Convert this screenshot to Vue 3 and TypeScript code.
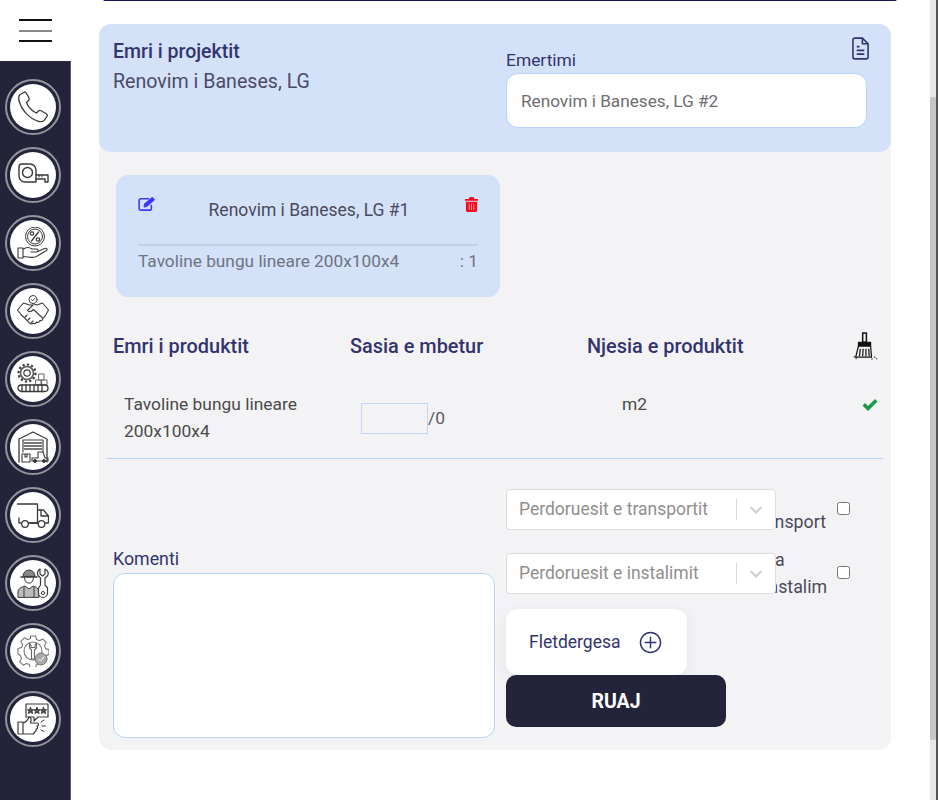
<script setup lang="ts">
const icons = ['phone', 'tape', 'percent', 'shake', 'gear', 'store', 'truck', 'worker', 'cog', 'rate']
</script>

<template>
  <div class="page">
    <aside class="side">
      <div class="burger"><i></i><i class="mid"></i><i></i></div>
      <nav class="rail">
        <div v-for="n in icons" :key="n" class="ring">
          <div class="disc">
            <svg class="glyph" viewBox="0 0 32 32" width="32" height="32" fill="none" stroke="#3a3a3a" stroke-width="1" stroke-linejoin="round" stroke-linecap="round">
              <template v-if="n === 'phone'">
                <path d="M3 3.500 7.500 1c1 0 1.500.5 2 1.500l2.500 4.500c.5 1 .2 1.800-.5 2.500L9.500 11.500c1.500 4 5.500 8.500 10 10.500l2-2c.8-.7 1.800-.8 2.700-.2l5 3c1 .6 1.300 1.600.8 2.500L27.500 29c-1 1.500-3.500 2-6 1.300C12 27.500 4.500 19 2 9.500 1.400 7 1.800 4.800 3 3.500Z" stroke-width="1.300"/>
              </template>
              <template v-else-if="n === 'tape'">
                <path d="M5 5h8a6 6 0 0 1 6 6v12H8a6 6 0 0 1-6-6V8a3 3 0 0 1 3-3Z" stroke-width="1.400"/>
                <circle cx="10.500" cy="13.500" r="5" stroke-width="1.400"/>
                <path d="M19 16h12v7h-3v-3h-9" stroke-width="1.400"/>
                <path d="M22 16v2M25 16v2" />
              </template>
              <template v-else-if="n === 'percent'">
                <circle cx="18" cy="9.500" r="9.500"/>
                <circle cx="18" cy="9.500" r="7.500"/>
                <path d="M21.500 5l-7 9" stroke-width="1.300"/>
                <circle cx="15" cy="6.500" r="1.700" stroke-width="1.200"/>
                <circle cx="21" cy="12.500" r="1.700" stroke-width="1.200"/>
                <path d="M1 21h5v10H1zM6 22.500c3-2.500 6-2.500 9-.5h4.500c2 0 2 3 0 3H14M19.500 25l8-3.500c2.500-.8 3.500 1 1.500 2.300l-10 6c-4 1.200-8 .5-13-.3" stroke-width="1.100"/>
              </template>
              <template v-else-if="n === 'shake'">
                <circle cx="16" cy="4.500" r="4"/>
                <path d="M14.500 4.500l1.200 1.200 2-2.200"/>
                <path d="M0.500 15l6-7 6 2h3.500l-5.500 5.500c1.500 2 4 1 6-1l9 8.500c1 1.500-1 3.500-2.500 2.300-.3 2.200-2.500 2.700-3.500 1.700-.5 1.800-2.500 2.300-3.500 1.200-1 1.300-2.800 1-3.800-.5L4 19.500Z" stroke-width="1.100"/>
                <path d="M31.500 15l-6-7-5.500 2-4-1.200M26.500 23l2.500-3.500 2.500-4.500" stroke-width="1.100"/>
                <path d="M8 22l2-2M11 25l2-2M14 28l2-2" stroke-width="1.100"/>
              </template>
              <template v-else-if="n === 'gear'">
                <circle cx="10" cy="10" r="3.200" stroke-width="1.200"/>
                <circle cx="10" cy="10" r="6.500" stroke-width="1.600" stroke="#555"/>
                <circle cx="10" cy="10" r="8.500" stroke-width="2.200" stroke-dasharray="2.200 2.200" stroke-linecap="butt"/>
                <path d="M19 17h5v5h-5zM25 17h5v5h-5zM22 11h5v6h-5z" stroke="#666"/>
                <rect x="1" y="22" width="30" height="6.500" rx="3.200" stroke-width="1.300"/>
                <path d="M5 22v6.500M9 22v6.500M13 22v6.500M17 22v6.500M21 22v6.500M25 22v6.500" stroke-width="1.300"/>
              </template>
              <template v-else-if="n === 'store'">
                <path d="M2 31V8L16 1l14 7v23" stroke-width="1.300"/>
                <path d="M6 21V9h20v12" stroke-width="1.100"/>
                <path d="M7 12h18M7 15h18M7 18h18" stroke-width="1.800" stroke="#777" stroke-linecap="butt"/>
                <path d="M5 23h8v8H5zM8 23v3h2v-3" stroke-width="1.100"/>
                <path d="M15 27h6v-6h5l2 6h3v3H15z" stroke-width="1.100"/>
                <circle cx="18" cy="30" r="1.500" fill="#333"/>
                <circle cx="27" cy="30" r="1.500" fill="#333"/>
              </template>
              <template v-else-if="n === 'truck'">
                <path d="M0.500 5h20v19H12M20.500 11h6l5 6v7h-3" stroke-width="1.300"/>
                <path d="M24 11v6h7M4 24H2v-5" stroke-width="1.300"/>
                <circle cx="8" cy="25" r="3.300" stroke-width="1.300"/>
                <circle cx="24.500" cy="25" r="3.300" stroke-width="1.300"/>
                <path d="M12 24h9" stroke-width="1.300"/>
              </template>
              <template v-else-if="n === 'worker'">
                <path d="M6 9a6 6 0 0 1 12 0z" fill="#888"/>
                <path d="M4 10h16" stroke-width="1.600"/>
                <path d="M7.500 11c0 7 9 7 9 0"/>
                <path d="M1 30v-5c0-3 3-5 7-6l4 3 4-3c4 1 6 3 6 6v5z" fill="#bbb"/>
                <path d="M7 20v10M17 20v10" />
                <path d="M23 2v5l2.500 2 2.500-2V2c2.800 1.500 3.800 4 2.700 6.500L28 11v7l2.500 3v5a4.500 4.500 0 0 1-9 0v-5l2-3v-7l-2.500-2.500C20 6 20.500 3.500 23 2Z" fill="#fff" stroke-width="1.200"/>
                <circle cx="26" cy="26" r="1.600"/>
              </template>
              <template v-else-if="n === 'cog'">
                <path d="M13.500 1h5l1 3.500 3 1.200 3.200-1.800 3.500 3.500-1.800 3.200 1.200 3 3.400 1v5l-3.400 1-1.200 3 1 1.800-4 4-2-1-3 1.200-1 3.400h-5l-1-3.400-3-1.200-3.200 1.800-3.500-3.500 1.800-3.200-1.200-3L1 18.500v-5l3.500-1 1.200-3-1.800-3.200 3.500-3.500 3.200 1.800 3-1.200Z" stroke="#777" stroke-width="1.100"/>
                <circle cx="16" cy="16" r="9" stroke="#777" stroke-width="1.100"/>
                <path d="M12.500 8v5l2 2v9h3v-9l2-2V8l-1.500 2.500v2h-4v-2Z" stroke="#666" stroke-width="1.100"/>
                <circle cx="24" cy="24" r="6" fill="#aaa" stroke="#777"/>
                <path d="M21.500 24l2 2 3.500-4" stroke="#fff"/>
              </template>
              <template v-else>
                <path d="M9 1h22v13H21l-4 4v-4H9z" stroke-width="1.200"/>
                <path d="M13.500 4.500l1.100 2.200h2l-1.500 1.500.5 2.300-2.100-1.200-2.100 1.200.5-2.300-1.500-1.500h2Z" fill="#555"/>
                <path d="M20 4.500l1.100 2.200h2l-1.500 1.500.5 2.300-2.100-1.200-2.100 1.200.5-2.300-1.500-1.500h2Z" fill="#555"/>
                <path d="M26.500 4.500l1.100 2.200h2l-1.500 1.500.5 2.300-2.100-1.200-2.100 1.200.5-2.300-1.500-1.500h2Z" fill="#555"/>
                <path d="M1 19h5v12H1zM6 20c3-1 5-3 6-6 2.500 0 2.500 3 1.500 6H20c2 0 2 3 0 3 1 1 1 3-1 3 .5 1.500 0 3-1.500 3 0 1.500-1 2-2 2H6" stroke-width="1.200"/>
                <path d="M24 19l3-2M25 23h3.500M24 27l3 1.500"/>
              </template>
            </svg>
          </div>
        </div>
      </nav>
    </aside>

    <main class="main">
      <div class="topline"></div>
      <section class="panel">
        <header class="head">
          <div class="head-left">
            <h3>Emri i projektit</h3>
            <p>Renovim i Baneses, LG</p>
          </div>
          <div class="head-right">
            <label class="name-label">Emertimi</label>
            <input class="name-input" value="Renovim i Baneses, LG #2" />
          </div>
          <svg class="doc" viewBox="0 0 18 24" width="17" height="23" fill="none" stroke="#33346e" stroke-width="1.700" stroke-linejoin="round">
            <path d="M3 1h8l6 6v14a2 2 0 0 1-2 2H3a2 2 0 0 1-2-2V3a2 2 0 0 1 2-2Z"/>
            <path d="M11 1v6h6M5 10h3M5 14h8M5 18h8"/>
          </svg>
        </header>

        <div class="version">
          <div class="version-top">
            <svg class="edit" viewBox="0 0 20 16" width="18" height="14" fill="none" stroke="#3b3bff" stroke-width="1.800" stroke-linejoin="round" stroke-linecap="round">
              <path d="M15 9.500V13a2 2 0 0 1-2 2H3a2 2 0 0 1-2-2V4a2 2 0 0 1 2-2h9"/>
              <path d="M7.500 8 16 1l2 2-8.500 7.500-2.500.5Z" fill="#3b3bff"/>
            </svg>
            <span class="version-title">Renovim i Baneses, LG #1</span>
            <svg class="trash" viewBox="0 0 14 16" width="13" height="15" fill="#f50a1e">
              <path d="M5 0h4l1 2h4v2H0V2h4ZM1 5h12v9.500a1.500 1.500 0 0 1-1.500 1.500h-9A1.500 1.500 0 0 1 1 14.500Z"/>
              <path d="M4 7h1v7H4zM6.500 7h1v7h-1zM9 7h1v7H9z" fill="#f7a0a8"/>
            </svg>
          </div>
          <div class="version-row">
            <span>Tavoline bungu lineare 200x100x4</span>
            <span>: 1</span>
          </div>
        </div>

        <div class="table table-head">
          <span>Emri i produktit</span>
          <span>Sasia e mbetur</span>
          <span>Njesia e produktit</span>
          <svg class="brush" viewBox="0 0 26 30" width="26" height="28" fill="none" stroke="#111" stroke-width="1.300" stroke-linejoin="round">
            <path d="M10.500 1h4v10h-4z" stroke-width="1.600"/>
            <path d="M6 11h13v4H6z" fill="#111"/>
            <path d="M6 15h13l1 12H3Z"/>
            <path d="M8 18l-1 8M11 18l-.5 8M14 18v8M17 18l.5 8" />
            <path d="M1 26.500h1M3 28.500h1M20 29h1M23 27h1M25 28.500h1" stroke-width="1.500"/>
          </svg>
        </div>

        <div class="table table-row">
          <span class="prod">Tavoline bungu lineare<br />200x100x4</span>
          <span class="qty"><input class="qty-input" /><span>/0</span></span>
          <span class="unit">m2</span>
          <svg class="check" viewBox="0 0 16 12" width="16" height="12" fill="#1a9b45">
            <path d="M0.500 6.500 3 4l3 3 7-7 2.500 2.500L6 12Z"/>
          </svg>
        </div>

        <div class="bottom">
          <div class="comment">
            <label>Komenti</label>
            <textarea></textarea>
          </div>
          <div class="opts">
            <div class="opt">
              <div class="select">
                <span class="ph">Perdoruesit e transportit</span>
                <span class="sep"></span>
                <svg viewBox="0 0 20 20" width="20" height="20" fill="#ccc"><path d="M4.500 7.100c.4-.4 1-.4 1.400 0L10 11.100l4.100-4c.4-.4 1-.4 1.400 0s.4 1 0 1.400l-4.800 4.700c-.4.400-1 .4-1.400 0L4.500 8.500c-.4-.4-.4-1 0-1.400Z"/></svg>
              </div>
              <span class="opt-label one">Transport</span>
              <input type="checkbox" class="cb" />
            </div>
            <div class="opt second">
              <div class="select">
                <span class="ph">Perdoruesit e instalimit</span>
                <span class="sep"></span>
                <svg viewBox="0 0 20 20" width="20" height="20" fill="#ccc"><path d="M4.500 7.100c.4-.4 1-.4 1.400 0L10 11.100l4.100-4c.4-.4 1-.4 1.400 0s.4 1 0 1.400l-4.800 4.700c-.4.400-1 .4-1.400 0L4.500 8.500c-.4-.4-.4-1 0-1.400Z"/></svg>
              </div>
              <span class="opt-label two">Pa<br />instalim</span>
              <input type="checkbox" class="cb" />
            </div>
            <div class="upload">
              <span>Fletdergesa</span>
              <svg viewBox="0 0 24 24" width="23" height="23" fill="none" stroke="#33346e" stroke-width="1.500" stroke-linecap="round">
                <circle cx="12" cy="12" r="10.500"/><path d="M12 6.500v11M6.500 12h11"/>
              </svg>
            </div>
            <button class="save">RUAJ</button>
          </div>
        </div>
      </section>
    </main>

    <div class="scrollbar"><div class="thumb"></div></div>
  </div>
</template>

<style>
html, body { margin: 0; background: #fff; overflow: hidden; }
</style>

<style scoped>
.page {
  display: flex;
  height: 800px;
  width: 938px;
  font-family: Roboto, "Liberation Sans", sans-serif;
  overflow: hidden;
  background: #fff;
}
.side { width: 71px; flex: none; display: flex; flex-direction: column; }
.burger {
  height: 61px;
  box-sizing: border-box;
  padding-top: 19px;
  display: flex;
  flex-direction: column;
  align-items: center;
  gap: 8.500px;
}
.burger i { display: block; width: 33px; height: 2px; background: #111; }
.burger i.mid { background: #888; }
.rail {
  flex: 1;
  background: #23233a;
  border-right: 1px solid #5a5a6e;
  box-sizing: border-box;
  padding-top: 18px;
  display: flex;
  flex-direction: column;
  gap: 12px;
}
.ring {
  width: 56px;
  height: 56px;
  margin-left: 4.500px;
  box-sizing: border-box;
  border-radius: 50%;
  border: 2px solid #94949e;
  display: flex;
  align-items: center;
  justify-content: center;
}
.disc {
  width: 46px;
  height: 46px;
  border-radius: 50%;
  background: #fff;
  display: flex;
  align-items: center;
  justify-content: center;
}
.glyph { filter: blur(0.3px); }
.main { flex: 1; min-width: 0; position: relative; padding: 24px 47px 0 28px; }
.topline {
  position: absolute;
  left: 32px;
  right: 41px;
  top: -1px;
  height: 2px;
  background: #14145e;
  border-radius: 0 0 3px 3px;
}
.panel {
  height: 726px;
  background: #f3f3f6;
  border-radius: 12px;
  display: flex;
  flex-direction: column;
}
.head {
  height: 128px;
  background: #d3e1f9;
  border-radius: 12px;
  display: grid;
  grid-template-columns: 393px 361px;
  position: relative;
  box-sizing: border-box;
  padding: 16px 0 0 14px;
}
.head-left h3 { margin: 0; font-size: 19.500px; line-height: 24px; font-weight: 500; color: #33346e; }
.head-left p { margin: 6px 0 0; font-size: 19.600px; line-height: 24px; color: #4b4b68; }
.head-right { display: flex; flex-direction: column; padding-top: 9px; min-width: 0; }
.name-label { font-size: 17.400px; line-height: 22px; color: #33346e; margin-bottom: 2px; }
.name-input {
  box-sizing: border-box;
  width: 361px;
  height: 55px;
  border: 1px solid #b9d2fb;
  border-radius: 12px;
  background: #fff;
  padding: 0 14px;
  font: 17.200px Roboto, sans-serif;
  color: #6e6e70;
  outline: none;
}
.doc { position: absolute; right: 22px; top: 13px; }
.version {
  width: 384px;
  height: 122px;
  box-sizing: border-box;
  margin: 23px 0 0 17px;
  background: #d3e1f9;
  border-radius: 12px;
  padding: 22px 22px 0;
  color: #4a4a5a;
}
.version-top {
  display: flex;
  align-items: flex-start;
  height: 47px;
  border-bottom: 2px solid #c2cfe6;
}
.version-title { flex: 1; text-align: center; font-size: 17.500px; line-height: 24px; color: #4a4a5a; margin: 1px 0 0 -3px; }
.version-row {
  display: flex;
  justify-content: space-between;
  font-size: 17.300px;
  line-height: 30px;
  color: #6e7480;
}
.table {
  display: grid;
  grid-template-columns: 237px 237px 277px auto;
  padding-left: 14px;
}
.table-head {
  margin-top: 29px;
  height: 40px;
  align-items: center;
  font-size: 19.900px;
  font-weight: 500;
  color: #33346e;
}
.brush { margin-left: -12px; }
.table-row {
  margin: 0 8px;
  padding: 25px 0 0 17px;
  border-bottom: 1px solid #b8d2fa;
  height: 93px;
  box-sizing: border-box;
  grid-template-columns: 237px 261px 240px auto;
  font-size: 17.400px;
  color: #4a4a4a;
}
.prod { line-height: 27px; }
.qty { display: flex; align-items: center; height: 30px; margin-top: 12px; color: #5a5a5a; }
.qty-input {
  box-sizing: border-box;
  width: 67px;
  height: 31px;
  background: transparent;
  border: 1px solid #c2d8fb;
  outline: none;
  padding: 0;
}
.unit { line-height: 27px; }
.check { margin-top: 8px; }
.bottom {
  display: grid;
  grid-template-columns: 393px 1fr;
  padding: 30px 0 0 14px;
}
.comment { display: flex; flex-direction: column; padding-top: 59px; }
.comment label { font-size: 17.800px; line-height: 22px; color: #33346e; margin-bottom: 3px; }
.comment textarea {
  box-sizing: border-box;
  width: 382px;
  height: 165px;
  background: #fff;
  border: 1px solid #bcd4f7;
  border-radius: 12px;
  outline: none;
  resize: none;
}
.opts { display: flex; flex-direction: column; align-items: flex-start; min-width: 0; }
.opt { display: flex; align-items: flex-start; height: 41px; font-size: 17.800px; color: #4a4a5a; }
.opt.second { margin-top: 23px; }
.select {
  box-sizing: border-box;
  width: 270px;
  height: 100%;
  margin-right: -10px;
  position: relative;
  z-index: 1;
  background: #fff;
  border: 1px solid #ddd;
  border-radius: 4px;
  display: flex;
  align-items: center;
  padding: 0 9px 0 12px;
}
.ph { flex: 1; font-size: 17.500px; color: #8f8f8f; white-space: nowrap; margin-top: -2px; }
.sep { width: 1px; height: 21px; background: #d8d8d8; margin-right: 9px; }
.opt-label { width: 60px; flex: none; display: block; white-space: nowrap; }
.opt-label.one { display: flex; justify-content: flex-end; padding-top: 21px; line-height: 24px; }
.opt-label.two { margin: -7px 0 0 -2px; width: 62px; line-height: 27px; }
.cb { margin: 13px 0 0 10.500px; width: 13px; height: 13px; }
.upload {
  margin-top: 15px;
  width: 181px;
  height: 66px;
  background: #fff;
  border-radius: 12px;
  box-shadow: 0 4px 14px rgba(60, 60, 90, 0.08);
  display: flex;
  align-items: center;
  box-sizing: border-box;
  padding: 0 22px 0 23px;
  gap: 18px;
  font-size: 17.500px;
  color: #33346e;
}
.upload span { white-space: nowrap; }
.save {
  width: 220px;
  height: 52px;
  border: 0;
  border-radius: 10px;
  background: #23233a;
  color: #fff;
  font: 700 19.500px Roboto, sans-serif;
}
.scrollbar {
  position: absolute;
  left: 930px;
  top: 0;
  width: 6px;
  height: 800px;
  background: #e6e6e6;
  border-right: 2px solid #555;
}
.thumb { margin-top: 97px; height: 643px; background: #c6c6c6; border-radius: 2px; }
</style>
